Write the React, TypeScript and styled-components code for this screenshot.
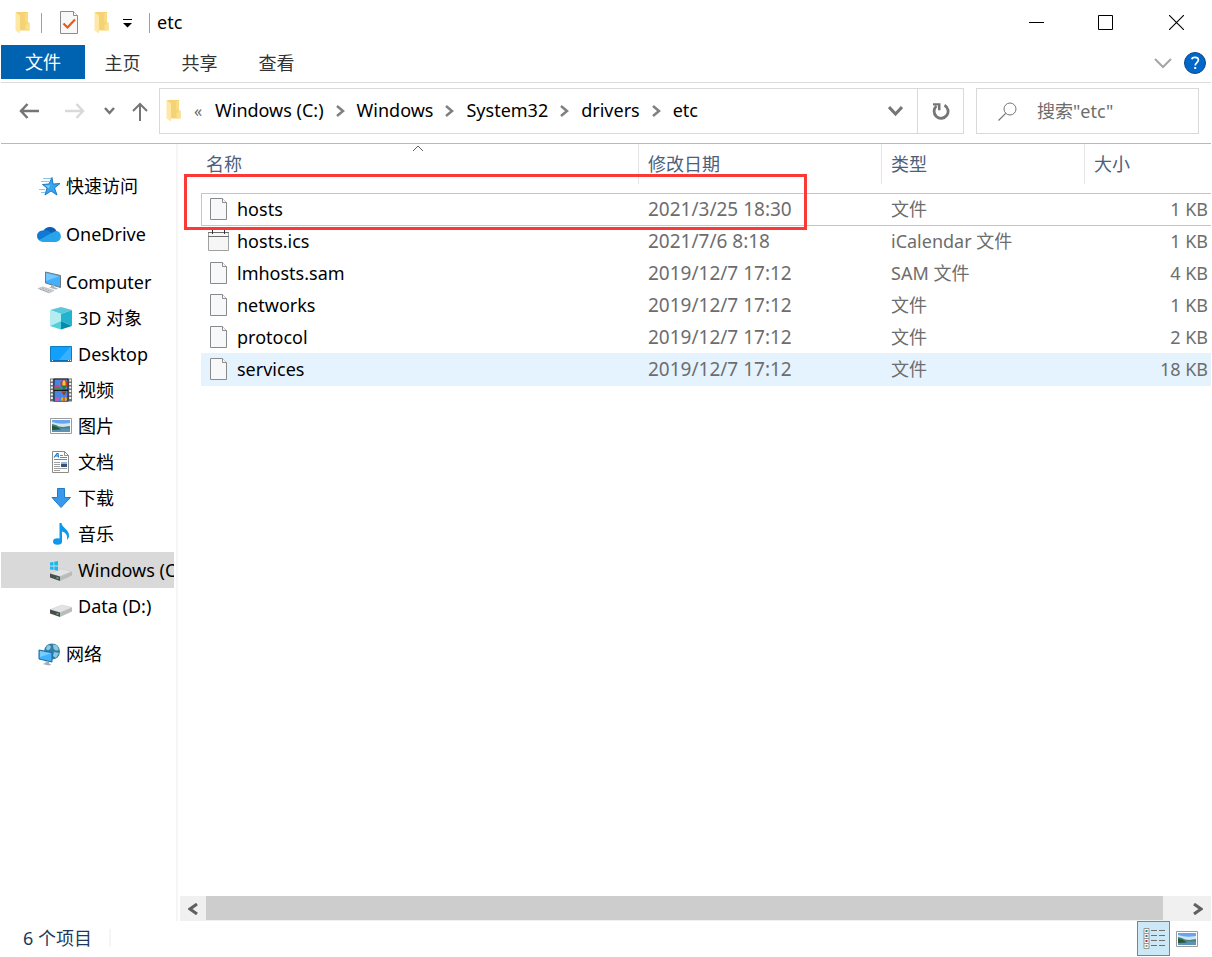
import React from 'react';
import styled, { createGlobalStyle, css } from 'styled-components';

const GlobalStyle = createGlobalStyle`
  *, *::before, *::after { box-sizing: border-box; }
  body {
    margin: 0;
    background: #fff;
    color: #000;
    font-family: 'Noto Sans', 'Noto Sans CJK SC', sans-serif;
    font-size: 18px;
    line-height: 24px;
  }
  button, input {
    margin: 0;
    padding: 0;
    border: 0;
    background: none;
    color: inherit;
    font: inherit;
  }
  ul, ol { list-style: none; margin: 0; padding: 0; }
  svg { display: block; flex: none; }
`;

/* ---------- frame ---------- */

const Window = styled.div`
  display: flex;
  flex-direction: column;
  min-height: 100vh;
  padding: 0 1px;
`;

const TitleBar = styled.header`
  display: flex;
  align-items: center;
  height: 45px;
  padding-left: 9px;
`;

const QuickTools = styled.div`
  display: flex;
  align-items: center;
`;

const ToolButton = styled.button<{ $w: number }>`
  display: flex;
  justify-content: center;
  width: ${(p) => p.$w}px;
`;

const Divider = styled.span<{ $gap?: number }>`
  width: 1px;
  height: 20px;
  margin-left: ${(p) => p.$gap ?? 0}px;
  background: #a0a0a0;
`;

const WindowTitle = styled.h1`
  flex: 1;
  margin: 0 0 0 7px;
  padding-bottom: 2px;
  font-size: 18px;
  font-weight: 400;
`;

const CaptionButton = styled.button`
  display: flex;
  align-items: center;
  justify-content: center;
  width: 70px;
  height: 45px;
`;

const Ribbon = styled.nav`
  display: flex;
  height: 38px;
  border-bottom: 1px solid #dadbdc;
`;

const RibbonTab = styled.button<{ $primary?: boolean }>`
  width: 77px;
  height: 36px;
  padding-right: 2px;
  color: #333;
  ${(p) =>
    p.$primary &&
    css`
      width: 84px;
      height: 34px;
      padding: 0;
      background: #0063b1;
      color: #fff;
    `}
`;

const RibbonEnd = styled.div`
  display: flex;
  align-items: center;
  gap: 12px;
  height: 36px;
  margin-left: auto;
  padding-right: 5px;
`;

/* ---------- navigation bar ---------- */

const NavBar = styled.div`
  display: flex;
  align-items: center;
  height: 61px;
  padding: 0 12px 4px 10px;
  border-bottom: 1px solid #b9b9b9;
`;

const NavButton = styled.button<{ $w: number }>`
  display: flex;
  align-items: center;
  justify-content: center;
  width: ${(p) => p.$w}px;
  height: 44px;
`;

const UpButton = styled(NavButton)`
  justify-content: flex-end;
`;

const AddressBox = styled.div`
  display: flex;
  flex: 1;
  align-items: center;
  height: 46px;
  margin: 0 12px 0 11px;
  padding-left: 6px;
  border: 1px solid #d9d9d9;
`;

const Crumbs = styled.ol`
  display: flex;
  flex: 1;
  align-items: center;
  padding-bottom: 2px;
`;

const Crumb = styled.li`
  display: flex;
  align-items: center;
`;

const CrumbGap = styled.span`
  display: flex;
  justify-content: center;
  width: 33px;
  padding-top: 2px;
`;

const Overflow = styled.button`
  width: 34px;
  color: #666;
  font-size: 16px;
`;

const RefreshButton = styled(NavButton)`
  border-left: 1px solid #d9d9d9;
`;

const SearchBox = styled.label`
  display: flex;
  align-items: center;
  gap: 20px;
  width: 223px;
  height: 46px;
  padding-left: 21px;
  border: 1px solid #d9d9d9;
`;

const SearchInput = styled.input`
  flex: 1;
  min-width: 0;
  outline: 0;
  &::placeholder { color: #6d6d6d; opacity: 1; }
`;

/* ---------- body ---------- */

const Body = styled.div`
  display: flex;
  flex: 1;
`;

const Sidebar = styled.nav`
  flex: none;
  width: 177px;
  padding: 24px 2px 0 0;
  border-right: 2px solid #f5f5f5;
`;

const Group = styled.ul`
  margin-bottom: 12px;
`;

const TreeItem = styled.a<{ $child?: boolean; $active?: boolean }>`
  display: flex;
  align-items: center;
  gap: 5px;
  height: 36px;
  padding-left: ${(p) => (p.$child ? 48 : 36)}px;
  overflow: hidden;
  background: ${(p) => (p.$active ? '#d9d9d9' : 'transparent')};
  color: #000;
  text-decoration: none;
  white-space: nowrap;
`;

const Content = styled.main`
  display: flex;
  flex: 1;
  flex-direction: column;
  min-width: 0;
`;

const Listing = styled.div`
  position: relative;
  flex: 1;
  padding-left: 23px;
`;

const Table = styled.table`
  width: 100%;
  border-collapse: separate;
  border-spacing: 0;
  table-layout: fixed;
`;

const Th = styled.th<{ $w?: number }>`
  width: ${(p) => (p.$w ? `${p.$w}px` : 'auto')};
  height: 49px;
  padding: 0;
  color: #4c607a;
  font-weight: 400;
  text-align: left;
  vertical-align: top;
`;

const HeadLabel = styled.button<{ $first?: boolean; $last?: boolean }>`
  display: block;
  width: 100%;
  height: 40px;
  padding-left: ${(p) => (p.$first ? 5 : 9)}px;
  border-right: ${(p) => (p.$last ? 0 : 1)}px solid #e5e5e5;
  text-align: left;
`;

const SortMark = styled.span`
  position: absolute;
  top: 1px;
  left: 234px;
`;

const Row = styled.tr<{ $state?: 'focus' | 'hover' }>`
  td {
    height: 32px;
    padding: 0 0 0 9px;
    color: #6d6d6d;
    white-space: nowrap;
    ${(p) => p.$state === 'hover' && css`background: #e5f3ff; box-shadow: 0 1px #e5f3ff;`}
    ${(p) => p.$state === 'focus' && css`box-shadow: inset 0 1px #99d1ff, 0 1px #99d1ff;`}
  }
  td:first-child {
    padding-left: 6px;
    color: #000;
    ${(p) => p.$state === 'focus' && css`box-shadow: inset 1px 1px #99d1ff, 0 1px #99d1ff;`}
  }
  td:nth-child(2) { font-size: 19px; }
  td:last-child { padding: 0 3px 0 0; text-align: right; }
`;

const FileName = styled.span`
  display: flex;
  align-items: center;
  gap: 6px;
`;

const Highlight = styled.div`
  position: absolute;
  top: 30px;
  left: 6px;
  width: 623px;
  height: 56px;
  border: 3px solid #fb3a38;
  pointer-events: none;
`;

const ScrollBar = styled.div`
  display: flex;
  height: 25px;
  margin-left: 2px;
  background: #f0f0f0;
`;

const ScrollButton = styled.button`
  display: flex;
  align-items: center;
  justify-content: center;
  width: 26px;
`;

const Thumb = styled.div`
  flex: 1;
  height: 24px;
  margin-right: 22px;
  background: #cdcdcd;
`;

const StatusBar = styled.footer`
  display: flex;
  align-items: center;
  height: 36px;
  padding: 0 8px 2px 22px;
  color: #1e395b;
`;

const StatusText = styled.span`
  margin-right: auto;
  padding-right: 17px;
  border-right: 2px solid #f5f5f5;
  line-height: 18px;
`;

const ViewButton = styled.button<{ $on?: boolean }>`
  display: flex;
  align-items: center;
  justify-content: center;
  align-self: flex-start;
  width: 33px;
  height: 35px;
  ${(p) => p.$on && css`border: 1px solid #26a0da; background: #cce8f6;`}
`;

/* ---------- icons ---------- */

const FolderIcon = () => (
  <svg width="15" height="22" viewBox="0 0 15 22">
    <path d="M1 0h12v10l1.500 1v7.500H5z" fill="#f5d374" />
    <path d="M10 1h3v9h-3z" fill="#f9dc82" />
    <path d="M.5.5l4.500 3v18L.5 18.500z" fill="#ffe8a6" />
    <path d="M13 10.500l1.500.5v7.500H10.500v-5z" fill="#fbe08c" />
  </svg>
);

const TaskIcon = () => (
  <svg width="18" height="23" viewBox="0 0 18 23">
    <path d="M.5.5h13l4 4v18H.5z" fill="#f8f8f8" stroke="#8c8c8c" />
    <path d="M13.500.5v4h4" fill="#fff" stroke="#8c8c8c" />
    <path d="M3.500 12.500l4 4 7.500-8" fill="none" stroke="#ea5a13" strokeWidth="2.200" />
  </svg>
);

const CustomizeIcon = () => (
  <svg width="9" height="10" viewBox="0 0 9 10">
    <path d="M0 1.500h9" stroke="#000" />
    <path d="M0 5h9L4.500 9.500z" fill="#000" />
  </svg>
);

const Chevron = ({ dir, w, h, color, stroke }: { dir: 'down' | 'up' | 'left' | 'right'; w: number; h: number; color: string; stroke: number }) => {
  const d = {
    down: `M1 1L${w / 2} ${h - 2}L${w - 1} 1`,
    up: `M1 ${h - 1}L${w / 2} 1L${w - 1} ${h - 1}`,
    right: `M1 1L${w - 2} ${h / 2}L1 ${h - 1}`,
    left: `M${w - 1} 1L2 ${h / 2}L${w - 1} ${h - 1}`,
  }[dir];
  return (
    <svg width={w} height={h} viewBox={`0 0 ${w} ${h}`}>
      <path d={d} fill="none" stroke={color} strokeWidth={stroke} />
    </svg>
  );
};

const BackIcon = ({ color, flip }: { color: string; flip?: boolean }) => (
  <svg width="20" height="16" viewBox="0 0 20 16">
    <path d="M8.500 1L2 8l6.500 7M2 8h18" transform={flip ? 'matrix(-1 0 0 1 20 0)' : undefined} fill="none" stroke={color} strokeWidth="2.500" />
  </svg>
);

const UpIcon = () => (
  <svg width="16" height="19" viewBox="0 0 16 19">
    <path d="M1 9L8 2l7 7M8 2v17" fill="none" stroke="#757575" strokeWidth="2" />
  </svg>
);

const RefreshIcon = () => (
  <svg width="18" height="18" viewBox="0 0 18 18">
    <path d="M12.500 3.200A7 7 0 1 1 4.500 4" fill="none" stroke="#757575" strokeWidth="2.800" />
    <path d="M1 1.200h7.500v7H6V3.600H1z" fill="#757575" />
  </svg>
);

const SearchIcon = () => (
  <svg width="19" height="19" viewBox="0 0 19 19">
    <circle cx="12" cy="7" r="6" fill="none" stroke="#757575" />
    <path d="M7.700 11.300L.5 18.500" stroke="#757575" strokeWidth="1.200" />
  </svg>
);

const HelpIcon = () => (
  <svg width="22" height="22" viewBox="0 0 22 22">
    <circle cx="11" cy="11" r="10.500" fill="#0067c8" stroke="#0a4a8c" />
    <path d="M7.800 7.200C8.500 4.800 14.400 4.500 14.400 8.100c0 2.400-3.200 2.700-3.200 5.400" fill="none" stroke="#fff" strokeWidth="1.700" />
    <rect x="10.200" y="15" width="2" height="2" fill="#fff" />
  </svg>
);

const MinimizeIcon = () => (
  <svg width="15" height="15" viewBox="0 0 15 15"><path d="M0 7.500h15" stroke="#000" /></svg>
);
const MaximizeIcon = () => (
  <svg width="16" height="15" viewBox="0 0 16 15"><path d="M.5.5h14v14H.5z" fill="none" stroke="#000" /></svg>
);
const CloseIcon = () => (
  <svg width="15" height="15" viewBox="0 0 15 15"><path d="M0 0l15 15M15 0L0 15" stroke="#000" strokeWidth="1.100" /></svg>
);

const FileIcon = () => (
  <svg width="24" height="23" viewBox="0 0 24 23">
    <path d="M3.500.5h12l4 4v17h-16z" fill="#f7f8f9" stroke="#8a8a8a" />
    <path d="M15.500.5v4h4" fill="#fff" stroke="#8a8a8a" />
  </svg>
);

const CalendarIcon = () => (
  <svg width="24" height="23" viewBox="0 0 24 23">
    <path d="M1.500 2.500h20v18h-20z" fill="#f6f6f6" stroke="#a0a0a0" />
    <path d="M1 2.500h21M1 6.500h21" stroke="#6d6d6d" />
    <path d="M5.500 0v4M17.500 0v4" stroke="#333" />
  </svg>
);

const SideSvg = ({ children }: { children: React.ReactNode }) => (
  <svg width="24" height="24" viewBox="0 0 24 24">{children}</svg>
);

const StarIcon = () => (
  <SideSvg>
    <path d="M15 3.500l1 6.500 7-.5-5.500 4.500 2.500 7-6-4-6 4 2-7L5.500 10.500l6.500-.5z" fill="#38a5ee" stroke="#1272bb" strokeWidth=".9" />
    <path d="M14.500 6l-1.500 5-5 .5 4 3z" fill="#7ccaf8" />
    <path d="M6 4.500h8M4 7.500h8M2 15.500h6M4 18.500h4" stroke="#84c8ef" />
  </SideSvg>
);

const CloudIcon = () => (
  <SideSvg>
    <path d="M6.500 8.500A7.500 7.500 0 0 1 19.500 9L13 14z" fill="#0a5fb4" />
    <path d="M5.500 8.500c4-1.500 6 0 9 2.500L4 19C-1.500 18-1.500 9 5.500 8.500z" fill="#1179d4" />
    <path d="M14.500 11l4.500-2c6 0 7 10 0 11H6c-1.500 0-3-1-4-2z" fill="#28a4ea" />
  </SideSvg>
);

const ComputerIcon = () => (
  <SideSvg>
    <path d="M8.500 2l15 3.500v12l-15-4.500z" fill="#44b0fa" stroke="#6c7882" />
    <path d="M9 3l13 3.300L9 11z" fill="#75c8ff" />
    <path d="M14 15v2l-2 .5 7 2 2-1-4-1.500v-2" fill="#aeb4b9" />
    <path d="M1 18.500L6 17l11 3.500-5 2.500z" fill="#d3d7da" stroke="#a6abb0" strokeWidth=".6" />
    <path d="M5 18l9 3.300M3 19l9 3.200" stroke="#8f959a" strokeWidth=".7" strokeDasharray="2 1" />
  </SideSvg>
);

const CubeIcon = () => (
  <SideSvg>
    <path d="M12 1l11 3-11 4L1 4z" fill="#5bc7dc" />
    <path d="M1 4l11 4v7L1 20z" fill="#b4edf0" />
    <path d="M23 4L12 8v7l11 5z" fill="#22b4cf" />
    <path d="M12 15l11 5-11 3.500z" fill="#078aab" />
    <path d="M12 15v8.500L1 20z" fill="#4fd0da" />
  </SideSvg>
);

const DesktopIcon = () => (
  <SideSvg>
    <path d="M1.500 4.500h21v15h-21z" fill="#12a0ff" stroke="#117bc0" />
    <path d="M9 19L21 5h1v14z" fill="#36b0ff" />
    <path d="M2 18.500h20" stroke="#0b6db8" />
    <path d="M3 18.500h1M19 18.500h3" stroke="#fff" strokeDasharray="1 1" />
  </SideSvg>
);

const VideoIcon = () => (
  <SideSvg>
    <path d="M1 .5h22v23H1z" fill="#6f7277" />
    <path d="M4.500.5h15v23h-15z" fill="#17191f" />
    <path d="M2.800 1.500v21M21.200 1.500v21" stroke="#f4f4f4" strokeWidth="2" strokeDasharray="2 1.500" />
    <path d="M5.500 1.500h13v10h-13zM5.500 13h13v10h-13z" fill="#4a86e0" />
    <path d="M5.500 7.500l3.500-1 3 3.500 1 1.500H5.500z" fill="#d3408d" />
    <path d="M5.500 9.500h7v2h-7z" fill="#3c8a4a" />
    <ellipse cx="15" cy="6" rx="3.500" ry="3.800" fill="#d93225" />
    <ellipse cx="15" cy="6" rx="1.600" ry="3.800" fill="#f6c63b" />
    <path d="M12 7.500h6l-2.500 3.500h-1z" fill="#257a38" />
    <path d="M12.500 13.500h5L15.500 17h-1z" fill="#c42626" />
    <path d="M13.500 14.500h3L15 17z" fill="#2b7339" />
    <circle cx="8" cy="21" r="2" fill="#ce57b1" />
    <ellipse cx="15" cy="21" rx="3" ry="2" fill="#eda72b" />
    <path d="M14.500 19h1v4h-1z" fill="#c42626" />
  </SideSvg>
);

const PictureIcon = () => (
  <SideSvg>
    <path d="M1.500 4.500h21v15h-21z" fill="#fff" stroke="#9b9b9b" />
    <path d="M3 6h18v12H3z" fill="#6aa5ec" />
    <path d="M3 8q8 3 18 1v4H3z" fill="#cfe6f6" />
    <path d="M3 10l4 1 3 1.500 4 .5 7-1v3H3z" fill="#4e8176" />
    <path d="M3 14.500h18V18H3z" fill="#5b92b8" />
    <path d="M3 11.500l5 1.500 4 2.500L3 16z" fill="#25583d" />
  </SideSvg>
);

const DocumentIcon = () => (
  <SideSvg>
    <path d="M3.500 1.500h12l4 4v17h-16z" fill="#fff" stroke="#8c8c8c" />
    <path d="M15.500 1.500v4h4" fill="none" stroke="#8c8c8c" />
    <path d="M5 7.500l3-4h1l.5 4M6.500 6H9" fill="none" stroke="#1479c9" strokeWidth="1.200" />
    <path d="M11 5.500h3M11 7.500h7M5 9.500h13" stroke="#3b97dc" />
    <path d="M5 12.500h6M5 14.500h6M5 16.500h6M5 18.500h13M5 20.500h6" stroke="#a0a0a0" />
    <path d="M12 12h6v5h-6z" fill="#8fbce6" />
    <path d="M12 14h6v3h-6z" fill="#34557a" />
  </SideSvg>
);

const DownloadIcon = () => (
  <SideSvg>
    <path d="M8.500 2.500h7v9h6L12 21.500l-9-10h5.500z" fill="#3899ec" stroke="#2379c4" />
  </SideSvg>
);

const MusicIcon = () => (
  <SideSvg>
    <ellipse cx="8.500" cy="19.500" rx="4.500" ry="3.200" fill="#0c99ed" />
    <path d="M10.500 1h2c.5 5 8 6.500 7.500 13-.2 1.800-1 3-2 4 .8-4.500-1-7.500-5-8.500v10.500h-2.500z" fill="#0c99ed" />
  </SideSvg>
);

const DriveIcon = ({ system }: { system?: boolean }) => (
  <SideSvg>
    <path d="M1 15.500L13 11l10 2.500L11 18.500z" fill="#e2e3e4" stroke="#c9cacb" strokeWidth=".5" />
    <path d="M1 15.500l10 3V23L1 19.500z" fill="#4a4c4d" />
    <path d="M11 18.500l12-5v4L11 23z" fill="#b9bbbc" />
    <path d="M7.500 20h2" stroke="#3dd659" strokeWidth="1.500" />
    {system && <path d="M1 4.500l3.500-.6v3.600H1zM5.300 3.700L9 3v4.500H5.300zM1 8.500h3.500v3.400L1 11.400zM5.300 8.500H9v4.200l-3.700-.6z" fill="#16b9ef" />}
  </SideSvg>
);

const NetworkIcon = () => (
  <SideSvg>
    <circle cx="15" cy="9.500" r="8" fill="#317fa9" />
    <path d="M10 4c3-2 5 1 3 3s-3 1-4 0zM16 2.500c4 0 6 3 5.500 5s-4 1-5-1zM17 10l5 1-3 5-3-2z" fill="#92c8dc" />
    <path d="M2 8l13 2.500v9.500L2 17z" fill="#41b2fa" stroke="#176ba3" />
    <path d="M3 9l11 2.500L3 15z" fill="#78ccff" />
    <path d="M8.500 19v2l-3 1 6 1.500 3-1-2.500-1v-1.500z" fill="#a3afb6" />
  </SideSvg>
);

const DetailsIcon = () => (
  <svg width="22" height="22" viewBox="0 0 22 22">
    <path d="M1 .5h5v20H1zM1 5.500h5M1 10.500h5M1 15.500h5" fill="#fff" stroke="#969696" />
    <path d="M2.500 2h2v2h-2z" fill="#397a71" /><path d="M2.500 7h2v2h-2z" fill="#3a6eb7" />
    <path d="M2.500 12h2v2h-2z" fill="#c52a20" /><path d="M2.500 17h2v2h-2z" fill="#79a850" />
    <path d="M8 2.500h6M16 2.500h6M8 7.500h6M16 7.500h6M8 12.500h6M16 12.500h6M8 17.500h6M16 17.500h6" stroke="#707070" />
  </svg>
);

/* ---------- data ---------- */

type Place = { label: string; icon: React.ReactNode; active?: boolean };

const places: Place[][] = [
  [{ label: '快速访问', icon: <StarIcon /> }],
  [{ label: 'OneDrive', icon: <CloudIcon /> }],
  [
    { label: 'Computer', icon: <ComputerIcon /> },
    { label: '3D 对象', icon: <CubeIcon /> },
    { label: 'Desktop', icon: <DesktopIcon /> },
    { label: '视频', icon: <VideoIcon /> },
    { label: '图片', icon: <PictureIcon /> },
    { label: '文档', icon: <DocumentIcon /> },
    { label: '下载', icon: <DownloadIcon /> },
    { label: '音乐', icon: <MusicIcon /> },
    { label: 'Windows (C:)', icon: <DriveIcon system />, active: true },
    { label: 'Data (D:)', icon: <DriveIcon /> },
  ],
  [{ label: '网络', icon: <NetworkIcon /> }],
];

const files: { name: string; date: string; type: string; size: string; calendar?: boolean; state?: 'focus' | 'hover' }[] = [
  { name: 'hosts', date: '2021/3/25 18:30', type: '文件', size: '1 KB', state: 'focus' },
  { name: 'hosts.ics', date: '2021/7/6 8:18', type: 'iCalendar 文件', size: '1 KB', calendar: true },
  { name: 'lmhosts.sam', date: '2019/12/7 17:12', type: 'SAM 文件', size: '4 KB' },
  { name: 'networks', date: '2019/12/7 17:12', type: '文件', size: '1 KB' },
  { name: 'protocol', date: '2019/12/7 17:12', type: '文件', size: '2 KB' },
  { name: 'services', date: '2019/12/7 17:12', type: '文件', size: '18 KB', state: 'hover' },
];

const path = ['Windows (C:)', 'Windows', 'System32', 'drivers', 'etc'];

export default function App() {
  return (
    <>
      <GlobalStyle />
      <Window>
        <TitleBar>
          <QuickTools>
            <ToolButton $w={24} aria-label="etc"><FolderIcon /></ToolButton>
            <Divider $gap={7} />
            <ToolButton $w={54} aria-label="属性"><TaskIcon /></ToolButton>
            <ToolButton $w={10} aria-label="新建文件夹"><FolderIcon /></ToolButton>
            <ToolButton $w={43} aria-label="自定义快速访问工具栏"><CustomizeIcon /></ToolButton>
            <Divider />
          </QuickTools>
          <WindowTitle>etc</WindowTitle>
          <CaptionButton aria-label="最小化"><MinimizeIcon /></CaptionButton>
          <CaptionButton aria-label="最大化"><MaximizeIcon /></CaptionButton>
          <CaptionButton aria-label="关闭"><CloseIcon /></CaptionButton>
        </TitleBar>

        <Ribbon>
          <RibbonTab $primary>文件</RibbonTab>
          <RibbonTab>主页</RibbonTab>
          <RibbonTab>共享</RibbonTab>
          <RibbonTab>查看</RibbonTab>
          <RibbonEnd>
            <button aria-label="展开功能区"><Chevron dir="down" w={18} h={11} color="#a5a5a5" stroke={2} /></button>
            <button aria-label="帮助"><HelpIcon /></button>
          </RibbonEnd>
        </Ribbon>

        <NavBar>
          <NavButton $w={36} aria-label="后退"><BackIcon color="#757575" /></NavButton>
          <NavButton $w={56} aria-label="前进"><BackIcon color="#d9d9d9" flip /></NavButton>
          <NavButton $w={12} aria-label="最近浏览的位置"><Chevron dir="down" w={11} h={8} color="#757575" stroke={2.5} /></NavButton>
          <UpButton $w={33} aria-label="上移"><UpIcon /></UpButton>
          <AddressBox>
            <FolderIcon />
            <Crumbs>
              <li><Overflow>«</Overflow></li>
              {path.map((part, i) => (
                <Crumb key={part}>
                  {i > 0 && <CrumbGap><Chevron dir="right" w={9} h={12} color="#808080" stroke={2.5} /></CrumbGap>}
                  <button>{part}</button>
                </Crumb>
              ))}
            </Crumbs>
            <NavButton $w={44} aria-label="以前的位置"><Chevron dir="down" w={15} h={10} color="#757575" stroke={3} /></NavButton>
            <RefreshButton $w={46} aria-label="刷新"><RefreshIcon /></RefreshButton>
          </AddressBox>
          <SearchBox>
            <SearchIcon />
            <SearchInput type="text" aria-label="搜索" placeholder={'搜索"etc"'} />
          </SearchBox>
        </NavBar>

        <Body>
          <Sidebar>
            {places.map((group) => (
              <Group key={group[0].label}>
                {group.map((place, i) => (
                  <li key={place.label}>
                    <TreeItem href="#" $child={i > 0} $active={place.active}>
                      {place.icon}
                      {place.label}
                    </TreeItem>
                  </li>
                ))}
              </Group>
            ))}
          </Sidebar>

          <Content>
            <Listing>
              <Table>
                <thead>
                  <tr>
                    <Th $w={438}><HeadLabel $first>名称</HeadLabel></Th>
                    <Th $w={243}><HeadLabel>修改日期</HeadLabel></Th>
                    <Th $w={203}><HeadLabel>类型</HeadLabel></Th>
                    <Th><HeadLabel $last>大小</HeadLabel></Th>
                  </tr>
                </thead>
                <tbody>
                  {files.map((file) => (
                    <Row key={file.name} $state={file.state}>
                      <td>
                        <FileName>
                          {file.calendar ? <CalendarIcon /> : <FileIcon />}
                          {file.name}
                        </FileName>
                      </td>
                      <td>{file.date}</td>
                      <td>{file.type}</td>
                      <td>{file.size}</td>
                    </Row>
                  ))}
                </tbody>
              </Table>
              <SortMark><Chevron dir="up" w={12} h={7} color="#606060" stroke={1} /></SortMark>
              <Highlight />
            </Listing>
            <ScrollBar>
              <ScrollButton aria-label="向左滚动"><Chevron dir="left" w={10} h={12} color="#606060" stroke={3} /></ScrollButton>
              <Thumb />
              <ScrollButton aria-label="向右滚动"><Chevron dir="right" w={10} h={12} color="#606060" stroke={3} /></ScrollButton>
            </ScrollBar>
          </Content>
        </Body>

        <StatusBar>
          <StatusText>6 个项目</StatusText>
          <ViewButton $on aria-label="详细信息"><DetailsIcon /></ViewButton>
          <ViewButton aria-label="大图标"><PictureIcon /></ViewButton>
        </StatusBar>
      </Window>
    </>
  );
}
